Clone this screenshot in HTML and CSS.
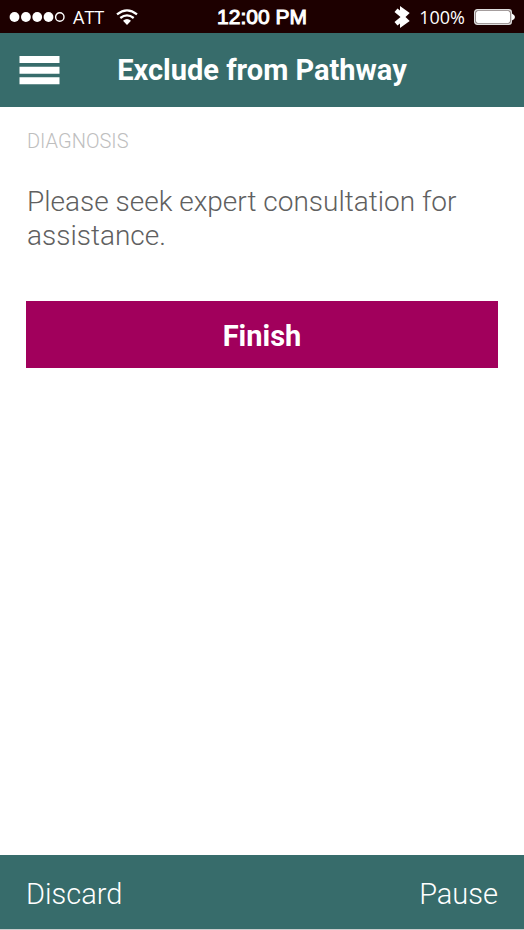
FILE: index.html
```html
<!DOCTYPE html>
<html lang="en">
<head>
<meta charset="utf-8">
<meta name="viewport" content="width=device-width, initial-scale=1">
<title>Exclude from Pathway</title>
<link rel="stylesheet" href="styles.css">
</head>
<body>
<div class="status">
  <div class="status-side">
    <svg class="signal" width="56" height="12" viewBox="0 0 56 12" aria-hidden="true">
      <g fill="#fff"><circle cx="5.500" cy="6" r="4.9"/><circle cx="16.900" cy="6" r="4.900"/><circle cx="28.200" cy="6" r="4.900"/><circle cx="39.500" cy="6" r="4.900"/></g>
      <circle cx="50.800" cy="6" r="4.200" fill="none" stroke="#fff" stroke-width="1.400"/>
    </svg>
    <span class="status-text">ATT</span>
    <svg class="wifi" width="22" height="16" viewBox="0 0 22 16" aria-hidden="true">
      <g fill="none" stroke="#fff" stroke-width="2.300"><path d="M1 5.300Q11 -2.600 21 5.300"/><path d="M4.300 9Q11 3.700 17.700 9"/></g>
      <path d="M7 11.800Q11 8.300 15 11.800L11 16Z" fill="#fff"/>
    </svg>
  </div>
  <span class="clock">12:00 PM</span>
  <div class="status-side status-right">
    <svg class="bluetooth" width="16" height="22" viewBox="0 0 16 22" aria-hidden="true">
      <path d="M6 0L15.700 7L11.500 11L15.700 15L6 22V17.500L3.500 19.500L.5 16L6.500 11L.5 6L3.500 2.500L6 4.500Z" fill="#fff"/>
    </svg>
    <span class="status-text">100%</span>
    <svg class="battery" width="41" height="16" viewBox="0 0 41 16" aria-hidden="true">
      <rect x=".7" y=".7" width="36.600" height="14.600" rx="2.500" fill="#6b5c5c" stroke="#ddd" stroke-width="1.400"/>
      <rect x="2" y="2" width="34" height="12" rx="2" fill="#fff"/>
      <path d="M38 4.500Q41 6 41 8T38 11.500Z" fill="#fff"/>
    </svg>
  </div>
</div>
<header class="header">
  <button class="menu" type="button" aria-label="Menu">
    <svg width="41" height="29" viewBox="0 0 41 29" aria-hidden="true">
      <path d="M.5 0H40.500V7H.5ZM.5 10.700H40.500V17.700H.5ZM.5 21.300H40.500V28.300H.5Z" fill="#fff"/>
    </svg>
  </button>
  <h1 class="title">Exclude from Pathway</h1>
</header>
<main class="content">
  <h2 class="section">DIAGNOSIS</h2>
  <p class="message">Please seek expert consultation for assistance.</p>
  <button class="finish" type="button">Finish</button>
</main>
<footer class="footer">
  <button class="action" type="button">Discard</button>
  <button class="action" type="button">Pause</button>
</footer>
</body>
</html>
```
FILE: styles.css
```css
* {
  box-sizing: border-box;
}

body {
  display: flex;
  flex-direction: column;
  min-height: 100vh;
  margin: 0;
  background: #fff;
  font-family: Roboto, sans-serif;
  font-size: 29px;
  line-height: 34px;
}

button {
  margin: 0;
  padding: 0;
  border: 0;
  background: none;
  color: #fff;
  font: inherit;
  cursor: pointer;
}

svg {
  display: block;
}

.status {
  display: grid;
  grid-template-columns: 1fr auto 1fr;
  align-items: center;
  height: 33px;
  padding: 0 9px;
  background: #1d0000;
  color: #fff;
  line-height: 24px;
}

.status-side {
  display: flex;
  align-items: center;
  gap: 8px;
}

.status-right {
  justify-content: flex-end;
  gap: 9px;
}

.status-text {
  font-family: "Open Sans", sans-serif;
  font-size: 18px;
  font-weight: 500;
}

.wifi {
  margin-left: 4px;
}

.clock {
  font-family: "Liberation Sans", sans-serif;
  font-size: 21px;
  -webkit-text-stroke: 1px #fff;
}

.header {
  display: grid;
  grid-template-columns: 41px 1fr 41px;
  align-items: center;
  height: 74px;
  padding: 0 19px;
  background: #376c6b;
  color: #fff;
}

.title {
  margin: 0;
  font-size: 29px;
  font-weight: 700;
  text-align: center;
}

.content {
  flex: 1;
  padding: 22px 26px;
}

.section {
  margin: 0;
  padding-left: 1px;
  color: #bebebe;
  font-size: 20px;
  font-weight: 300;
  line-height: 24px;
}

.message {
  margin: 32px 0 48px;
  padding-left: 1px;
  color: #606060;
  font-size: 28px;
  font-weight: 300;
}

.finish {
  width: 100%;
  height: 67px;
  padding-top: 2px;
  background: #a1005c;
  font-weight: 700;
}

.footer {
  display: flex;
  justify-content: space-between;
  align-items: center;
  height: 75px;
  padding: 4px 26px 0;
  border-bottom: 1px solid #ccc;
  background: #376c6b;
}

.action {
  font-weight: 300;
}
```
